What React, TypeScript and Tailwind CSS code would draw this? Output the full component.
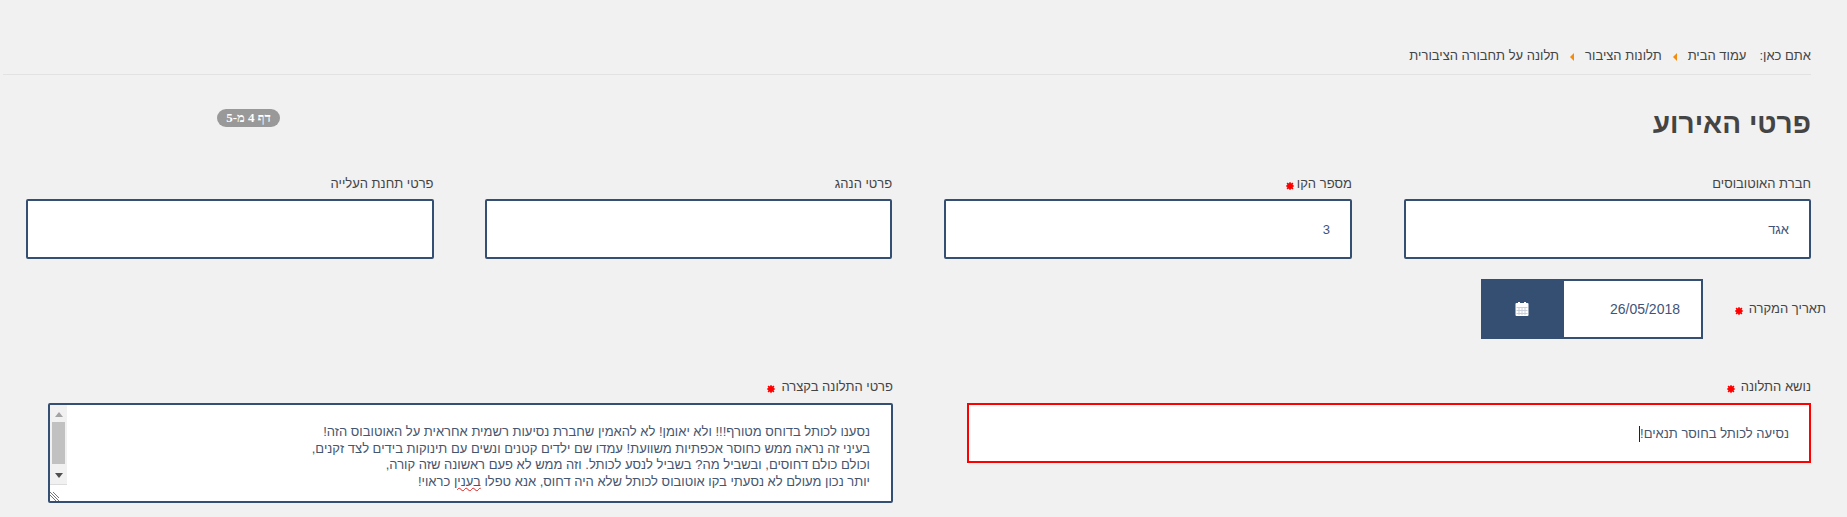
import React from "react";

function Star() {
  return (
    <svg width="8" height="8" viewBox="0 0 16 16" className="inline-block shrink-0 mt-[3px]">
      <circle cx="8" cy="8" r="6" fill="#f00" />
      <g stroke="#f00" strokeWidth="2.5">
        <line x1="8" y1="0" x2="8" y2="16" />
        <line x1="0" y1="8" x2="16" y2="8" />
        <line x1="2" y1="2" x2="14" y2="14" />
        <line x1="14" y1="2" x2="2" y2="14" />
      </g>
    </svg>
  );
}

function Arrow() {
  return (
    <svg width="4" height="8" viewBox="0 0 4 8" className="shrink-0 mt-[7px]">
      <polygon points="4,0 4,8 0,4" fill="#f58a0b" />
    </svg>
  );
}

function CalendarIcon() {
  return (
    <svg width="14" height="14" viewBox="0 0 14 14" className="mr-[3px]">
      <rect x="3" y="0" width="2" height="2" fill="#ffffff" />
      <rect x="9" y="0" width="2" height="2" fill="#ffffff" />
      <rect x="0.5" y="1" width="13" height="13" rx="1" fill="#ffffff" />
      <g fill="#c9d0da">
        <rect x="1.5" y="5" width="11" height="1" />
        <rect x="1.5" y="8" width="11" height="1" />
        <rect x="1.5" y="11" width="11" height="1" />
        <rect x="3.5" y="5" width="1" height="8" />
        <rect x="6.5" y="5" width="1" height="8" />
        <rect x="9.5" y="5" width="1" height="8" />
      </g>
    </svg>
  );
}

function Field({ label, value, required, className }: { label: string; value?: string; required?: boolean; className?: string }) {
  return (
    <div className={className}>
      <label className="flex items-center gap-[3px] text-[13px] leading-[20px] text-[#444] mb-[5px]">
        {label}
        {required && <Star />}
      </label>
      <input
        readOnly
        value={value ?? ""}
        className="block w-full h-[60px] bg-white border-2 border-[#354f72] rounded-[2px] px-[20px] text-[13px] text-[#3f5478] outline-none"
      />
    </div>
  );
}

export default function App() {
  return (
    <div dir="rtl" className="h-[517px] overflow-hidden bg-[#f1f1f1] font-['Liberation_Sans',Arial,sans-serif]">
      <nav className="ml-[3px] mr-[36px] h-[75px] pt-[46px] border-b border-[#e2e2e2] flex items-start text-[13px] leading-[20px] text-[#444]">
        <span className="ml-[13px]">אתם כאן:</span>
        <div className="flex items-start gap-[11px]">
          <span>עמוד הבית</span>
          <Arrow />
          <span>תלונות הציבור</span>
          <Arrow />
          <span>תלונה על תחבורה הציבורית</span>
        </div>
      </nav>

      <div className="flex items-start justify-between mr-[36px] ml-[217px] mt-[32px]">
        <h1 className="text-[28px] leading-[34px] font-bold text-[#444]">פרטי האירוע</h1>
        <span className="mt-[2px] h-[18px] w-[63px] flex items-center justify-center rounded-full bg-[#999] text-white text-[13px] font-bold font-['Liberation_Serif',serif]">
          דף 4 מ-5
        </span>
      </div>

      <div className="grid grid-cols-[407.4px_408px_407px_408px] gap-x-[51.7px] mr-[36px] mt-[33px]">
        <Field label="חברת האוטובוסים" value="אגד" />
        <Field label="מספר הקו" value="3" required className="[&_input]:mt-[2px]" />
        <Field label="פרטי הנהג" />
        <Field label="פרטי תחנת העלייה" />
      </div>

      <div className="flex items-center mr-[21px] mt-[20px] h-[60px]">
        <label className="w-[123px] flex items-center gap-[6px] text-[13px] text-[#444]">
          תאריך המקרה
          <Star />
        </label>
        <div className="flex w-[222px] h-[60px] border-2 border-[#354f72]">
          <input
            readOnly
            value="26/05/2018"
            className="flex-1 min-w-0 bg-white pr-[21px] text-[14px] text-[#3f5478] outline-none"
          />
          <span className="w-[81px] flex items-center justify-center bg-[#354f72]">
            <CalendarIcon />
          </span>
        </div>
      </div>

      <div className="grid grid-cols-[844px_845px] gap-x-[74px] mr-[36px] mt-[38px]">
        <div>
          <label className="flex items-center gap-[6px] text-[13px] leading-[20px] text-[#444] mb-[6px]">
            נושא התלונה
            <Star />
          </label>
          <div className="h-[60px] bg-white border-2 border-[#f00] pr-[20px] pt-[1px] flex items-center text-[13px] text-[#46556e]">
            נסיעה לכותל בחוסר תנאים!
            <span className="inline-block w-px h-[16px] bg-[#222]" />
          </div>
        </div>
        <div>
          <label className="flex items-center gap-[6px] text-[13px] leading-[20px] text-[#444] mb-[6px]">
            פרטי התלונה בקצרה
            <Star />
          </label>
          <div className="relative h-[100px] bg-white border-2 border-[#354f72] rounded-[2px] pr-[21px] pt-[19px] text-[13px] leading-[16.5px] text-[#46556e] overflow-hidden">
            <div>נסענו לכותל בדוחס מטורף!!! ולא יאומן! לא להאמין שחברת נסיעות רשמית אחראית על האוטובוס הזה!</div>
            <div>בעיני זה נראה ממש כחוסר אכפתיות משוועת! עמדו שם ילדים קטנים ונשים עם תינוקות בידים לצד זקנים,</div>
            <div>וכולם כולם דחוסים, ובשביל מה? בשביל לנסע לכותל. וזה ממש לא פעם ראשונה שזה קורה,</div>
            <div>
              יותר נכון מעולם לא נסעתי בקו אוטובוס לכותל שלא היה דחוס, אנא טפלו{" "}
              <span className="underline decoration-wavy decoration-[#e02020] decoration-1">בענין</span> כראוי!
            </div>
            <div className="absolute left-0 top-0 w-[17px] h-[80px] bg-[#f1f1f1] border-b border-[#dcdcdc] flex flex-col items-center">
              <svg width="8" height="5" viewBox="0 0 8 5" className="mt-[7px]">
                <polygon points="4,0 8,5 0,5" fill="#a3a3a3" />
              </svg>
              <div className="w-[13px] h-[42px] mt-[5px] bg-[#c1c1c1]" />
              <svg width="8" height="5" viewBox="0 0 8 5" className="mt-[9px]">
                <polygon points="0,0 8,0 4,5" fill="#505050" />
              </svg>
            </div>
            <svg width="9" height="9" viewBox="0 0 9 9" className="absolute left-0 bottom-0">
              <g stroke="#777" strokeWidth="1">
                <line x1="0" y1="0" x2="9" y2="9" />
                <line x1="0" y1="3" x2="6" y2="9" />
                <line x1="3" y1="0" x2="9" y2="6" />
              </g>
            </svg>
          </div>
        </div>
      </div>
    </div>
  );
}
